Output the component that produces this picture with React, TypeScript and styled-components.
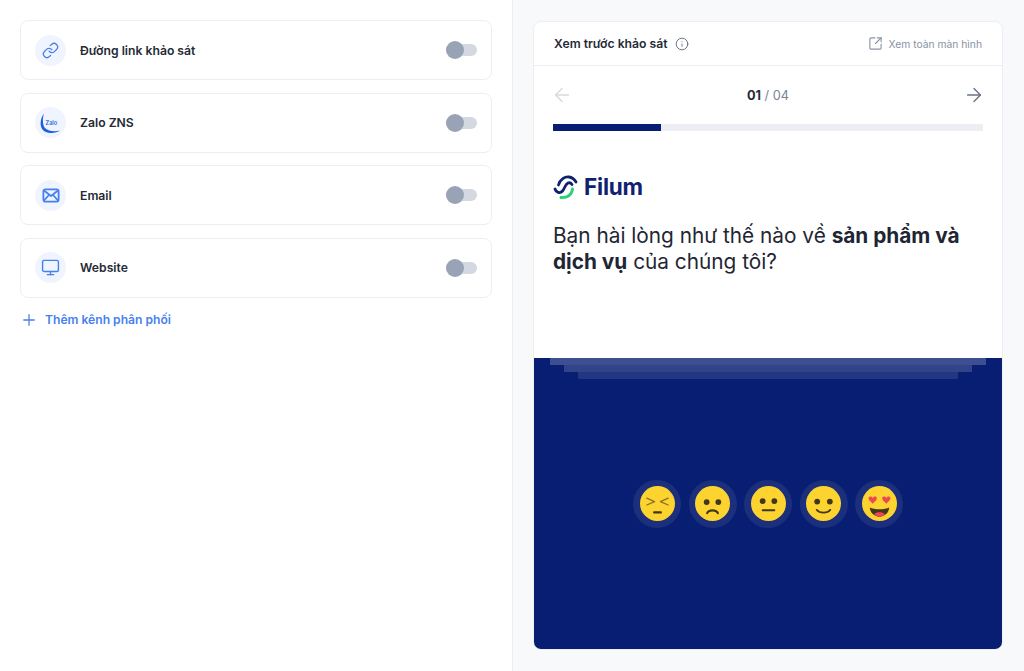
import React from "react";
import styled, { createGlobalStyle } from "styled-components";
import { ArrowLeft, ArrowRight, Info, Link, Monitor, Plus, SquareArrowOutUpRight } from "lucide-react";

const Global = createGlobalStyle`
  html, body { margin: 0; padding: 0; height: 671px; overflow: hidden; background: #fff; }
  body { font-family: Inter, "Noto Sans", sans-serif; color: #1f2633; }
  * { box-sizing: border-box; }
`;

const Page = styled.div`
  display: grid;
  grid-template-columns: 512px 512px;
  height: 671px;
`;

const LeftPane = styled.section`
  display: flex;
  flex-direction: column;
  padding: 20px 20px 0;
  background: #fff;
`;

const ChannelList = styled.div`
  display: flex;
  flex-direction: column;
  gap: 12.67px;
`;

const ChannelCard = styled.div`
  display: flex;
  align-items: center;
  height: 60px;
  padding: 0 14px;
  border: 1px solid #eceef2;
  border-radius: 8px;
  background: #fff;
`;

const IconBadge = styled.div`
  display: flex;
  align-items: center;
  justify-content: center;
  width: 31px;
  height: 31px;
  border-radius: 50%;
  background: #eff4fe;
  color: #4680f0;
  flex: none;
`;

const ChannelName = styled.span`
  margin-left: 14px;
  font-size: 12.2px;
  font-weight: 600;
  color: #252a36;
  flex: 1;
`;

const Toggle = styled.div`
  position: relative;
  width: 31px;
  height: 12px;
  border-radius: 6px;
  background: #d3d8e1;
`;

const ToggleKnob = styled.span`
  position: absolute;
  left: 0;
  top: -3px;
  width: 18px;
  height: 18px;
  border-radius: 50%;
  background: #99a3b6;
`;

const AddButton = styled.div`
  display: flex;
  align-items: center;
  gap: 7px;
  margin-top: 13px;
  height: 18px;
  color: #4680f0;
  font-size: 12.1px;
  font-weight: 600;
`;

const RightPane = styled.section`
  padding: 21px 21px 21px 20px;
  background: #f8f9fb;
  border-left: 1px solid #eceef2;
`;

const PreviewCard = styled.div`
  display: flex;
  flex-direction: column;
  height: 629px;
  background: #fff;
  border: 1px solid #eceef2;
  border-radius: 8px;
  overflow: hidden;
`;

const PreviewHeader = styled.header`
  display: flex;
  align-items: center;
  justify-content: space-between;
  flex: none;
  height: 44px;
  padding: 0 20px;
  border-bottom: 1px solid #eceef2;
`;

const HeaderTitle = styled.div`
  display: flex;
  align-items: center;
  gap: 7px;
  font-size: 12.2px;
  font-weight: 600;
  color: #252a36;
  svg { color: #5b6475; }
`;

const FullScreen = styled.div`
  display: flex;
  align-items: center;
  gap: 6px;
  font-size: 10.3px;
  color: #8a92a3;
`;

const Survey = styled.div`
  flex: none;
  height: 292px;
  padding: 0 19px;
`;

const Pager = styled.div`
  display: flex;
  align-items: center;
  justify-content: space-between;
  height: 58px;
  margin: 0 -2px;
  color: #6a7385;
`;

const PagerCount = styled.span`
  font-size: 12.7px;
  color: #7a8394;
  b { font-weight: 700; color: #252a36; }
`;

const Progress = styled.div`
  height: 7px;
  background: #eceef3;
`;

const ProgressFill = styled.div`
  height: 100%;
  background: #081e72;
`;

const Brand = styled.div`
  display: flex;
  align-items: center;
  gap: 6px;
  margin-top: 43px;
  height: 26px;
`;

const BrandName = styled.span`
  font-size: 22.5px;
  line-height: 26px;
  font-weight: 700;
  letter-spacing: -0.2px;
  color: #0f2270;
`;

const Question = styled.h2`
  margin: 23px 0 0;
  font-size: 20.8px;
  line-height: 26px;
  font-weight: 400;
  color: #1f2633;
  b { font-weight: 700; }
`;

const Answers = styled.div`
  position: relative;
  flex: 1;
  display: flex;
  align-items: center;
  justify-content: center;
  gap: 7.5px;
  background: #081e72;
`;

const Layers = styled.div`
  position: absolute;
  top: 0;
  left: 0;
  right: 0;
  display: flex;
  flex-direction: column;
  align-items: center;
`;

const Layer = styled.div<{ $inset: number; $alpha: number }>`
  height: 7px;
  width: calc(100% - ${(p) => p.$inset * 2}px);
  background: rgba(255, 255, 255, ${(p) => p.$alpha});
`;

const EmojiRing = styled.div`
  display: flex;
  align-items: center;
  justify-content: center;
  width: 48px;
  height: 48px;
  border-radius: 50%;
  background: rgba(255, 255, 255, 0.08);
`;

const face = "#fdd32f";
const ink = "#3f3720";

const Face = ({ children }: { children: React.ReactNode }) => (
  <svg width="35" height="35" viewBox="0 0 36 36">
    <circle cx="18" cy="18" r="18" fill={face} />
    {children}
  </svg>
);

const Persevere = () => (
  <Face>
    <g fill="none" stroke="#85722a" strokeWidth="1.3" strokeLinecap="round" strokeLinejoin="round">
      <path d="M7 12.5 L15 16 L7 19.5" />
      <path d="M29 12.5 L21 16 L29 19.5" />
    </g>
    <rect x="13.5" y="26" width="9" height="2.4" rx="1" fill={ink} />
  </Face>
);
const Sad = () => (
  <Face>
    <circle cx="12" cy="16.5" r="3" fill={ink} />
    <circle cx="24" cy="16.5" r="3" fill={ink} />
    <path d="M12.5 28 C14 24 22 24 23.5 28" fill="none" stroke={ink} strokeWidth="2.2" strokeLinecap="round" />
  </Face>
);
const Neutral = () => (
  <Face>
    <circle cx="12" cy="15.5" r="3" fill={ink} />
    <circle cx="24" cy="15.5" r="3" fill={ink} />
    <rect x="11" y="24" width="14" height="2" rx="1" fill={ink} />
  </Face>
);
const Smile = () => (
  <Face>
    <circle cx="11.5" cy="16" r="3" fill={ink} />
    <circle cx="24.5" cy="16" r="3" fill={ink} />
    <path d="M11 24.5 C14 28.5 22 28.5 25 24.5" fill="none" stroke={ink} strokeWidth="1.8" strokeLinecap="round" />
  </Face>
);
const Heart = ({ x }: { x: number }) => (
  <path
    transform={`translate(${x} 10.5) scale(0.85)`}
    d="M0 2.2 C-1 -0.6 -5 -0.4 -5 2.6 C-5 5 -2 7 0 9 C2 7 5 5 5 2.6 C5 -0.4 1 -0.6 0 2.2 Z"
    fill="#ef4656"
  />
);
const Love = () => (
  <Face>
    <Heart x={11} />
    <Heart x={25} />
    <path d="M8 22 C12 24.5 24 24.5 28 22 C27.5 28 23 31.5 18 31.5 C13 31.5 8.5 28 8 22 Z" fill={ink} />
    <path d="M12.5 29 C15 26.5 21 26.5 23.5 29 C22 30.8 20 31.5 18 31.5 C16 31.5 14 30.8 12.5 29 Z" fill="#ef4656" />
  </Face>
);

const ZaloMark = () => (
  <svg width="24" height="24" viewBox="0 0 24 24">
    <path d="M5 2.5 C0.5 8 0.5 17 5 20 C10 23 17 22.5 21 19.5 C15 21 8 20 5.5 16.5 C3.5 13 3.5 7 5 2.5 Z" fill="#1e5fe0" />
    <text x="6.5" y="13.5" fontSize="5.6" fontWeight="600" fontFamily="Inter, sans-serif" fill="#2f6de6">Zalo</text>
  </svg>
);

const MailMark = () => (
  <svg width="18" height="15" viewBox="0 0 18 15" fill="none" stroke="currentColor" strokeWidth="1.8" strokeLinecap="round" strokeLinejoin="round">
    <rect x="1.4" y="1.4" width="15.2" height="12.2" rx="2" />
    <path d="M2 2.5 L9 8 L16 2.5" />
    <path d="M2 12.5 L6.5 7.5 M16 12.5 L11.5 7.5" />
  </svg>
);

const FilumMark = () => (
  <svg width="25" height="25" viewBox="0 0 25 25" fill="none" strokeLinecap="round">
    <path d="M5.5 10 C7 4 12 1.5 16 2 C19 2.4 21.5 4.5 23 7" stroke="#0f2270" strokeWidth="2.8" />
    <path d="M2 14 C3 17.5 7 19 9.5 16 C12 13 12 9.5 15 8 C16.5 7.4 18 8 19 9.5" stroke="#0f2270" strokeWidth="2.8" />
    <path d="M8 22.5 C14 23 19 20 19.5 14" stroke="#2fce7c" strokeWidth="3" />
  </svg>
);

const channels = [
  { name: "Đường link khảo sát", icon: <Link size={17} strokeWidth={1.8} /> },
  { name: "Zalo ZNS", icon: <ZaloMark /> },
  { name: "Email", icon: <MailMark /> },
  { name: "Website", icon: <Monitor size={19} strokeWidth={1.8} /> },
];

export default function App() {
  return (
    <>
      <Global />
      <Page>
        <LeftPane>
          <ChannelList>
            {channels.map((c) => (
              <ChannelCard key={c.name}>
                <IconBadge>{c.icon}</IconBadge>
                <ChannelName>{c.name}</ChannelName>
                <Toggle>
                  <ToggleKnob />
                </Toggle>
              </ChannelCard>
            ))}
          </ChannelList>
          <AddButton>
            <Plus size={18} strokeWidth={1.7} />
            <span>Thêm kênh phân phối</span>
          </AddButton>
        </LeftPane>
        <RightPane>
          <PreviewCard>
            <PreviewHeader>
              <HeaderTitle>
                Xem trước khảo sát
                <Info size={14} strokeWidth={1.5} />
              </HeaderTitle>
              <FullScreen>
                <SquareArrowOutUpRight size={15} strokeWidth={1.8} />
                Xem toàn màn hình
              </FullScreen>
            </PreviewHeader>
            <Survey>
              <Pager>
                <ArrowLeft size={22} strokeWidth={1.5} color="#d5d9e1" />
                <PagerCount>
                  <b>01</b> / 04
                </PagerCount>
                <ArrowRight size={22} strokeWidth={1.5} />
              </Pager>
              <Progress>
                <ProgressFill style={{ width: `${(1 / 4) * 100}%` }} />
              </Progress>
              <Brand>
                <FilumMark />
                <BrandName>Filum</BrandName>
              </Brand>
              <Question>
                Bạn hài lòng như thế nào về <b>sản phẩm và dịch vụ</b> của chúng tôi?
              </Question>
            </Survey>
            <Answers>
              <Layers>
                <Layer $inset={16} $alpha={0.22} />
                <Layer $inset={30} $alpha={0.17} />
                <Layer $inset={44} $alpha={0.11} />
              </Layers>
              <EmojiRing><Persevere /></EmojiRing>
              <EmojiRing><Sad /></EmojiRing>
              <EmojiRing><Neutral /></EmojiRing>
              <EmojiRing><Smile /></EmojiRing>
              <EmojiRing><Love /></EmojiRing>
            </Answers>
          </PreviewCard>
        </RightPane>
      </Page>
    </>
  );
}
